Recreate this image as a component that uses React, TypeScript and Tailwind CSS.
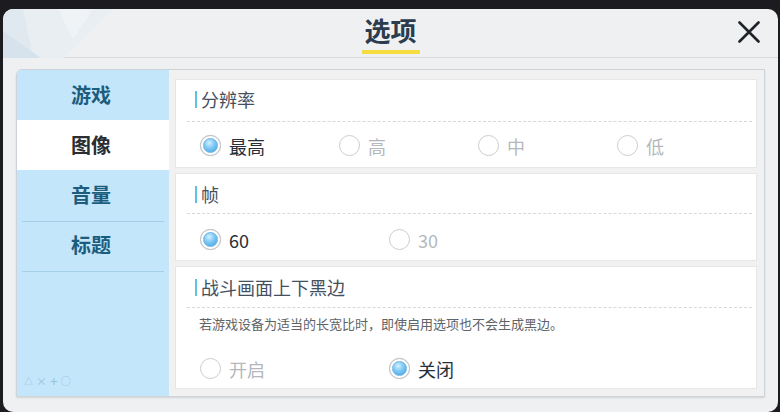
import React from "react";

type Opt = { label: string; checked?: boolean };

function Radio({ label, checked }: Opt) {
  return (
    <div className="flex items-center">
      <div
        className={
          "w-[21px] h-[21px] rounded-full border flex items-center justify-center bg-white " +
          (checked ? "border-[#b9bfc5] shadow-[0_0_1px_rgba(0,0,0,0.2)]" : "border-[#c9cdd1]")
        }
      >
        {checked && (
          <div className="w-[15px] h-[15px] rounded-full bg-[radial-gradient(circle_at_40%_30%,#d4f0ff_0%,#7cc8f4_45%,#3e9fe2_100%)] border border-[#6bb3e4]" />
        )}
      </div>
      <span
        className={
          "ml-[8px] text-[18px] leading-none " +
          (checked ? "text-[#262e39]" : "text-[#b4b8bc]")
        }
      >
        {label}
      </span>
    </div>
  );
}

function CardTitle({ children }: { children: React.ReactNode }) {
  return (
    <div className="flex items-center h-[20px] pl-[19px]">
      <div className="w-[2px] h-[17px] bg-[#5cc3e0]" />
      <span className="ml-[4px] text-[18px] leading-none text-[#45505e]">{children}</span>
    </div>
  );
}

function Dashed() {
  return <div className="ml-[11px] mr-[4px] border-t border-dashed border-[#d6d8da]" />;
}

export default function App() {
  const tabs = [
    { name: "游戏", active: false },
    { name: "图像", active: true },
    { name: "音量", active: false },
    { name: "标题", active: false },
  ];

  return (
    <div
      className="w-[780px] h-[412px] bg-[#1c1b20] overflow-hidden"
      style={{ fontFamily: '"Noto Sans CJK SC", "Noto Sans", sans-serif' }}
    >
      <div className="ml-[3px] mt-[9px] w-[775px] h-[403px] rounded-[10px] bg-[#eef0f2] overflow-hidden flex flex-col">
        {/* header */}
        <div className="relative h-[49px] shrink-0 border-b border-[#d9dcdf] flex items-center justify-center">
          <svg className="absolute left-0 top-0" width="130" height="49" viewBox="0 0 130 49">
            <polygon points="0,0 70,0 20,49 0,49" fill="#e0e9f0" />
            <polygon points="20,0 110,0 60,49 30,49" fill="#e8eef2" />
            <polygon points="0,22 38,49 0,49" fill="#d6e3ec" />
            <polygon points="55,0 90,0 70,30" fill="#f0f3f5" />
          </svg>
          <div className="relative flex flex-col items-center">
            <span className="text-[26px] font-bold leading-none text-[#2d3b4e] mt-[4px]">选项</span>
            <div className="mt-[7px] w-[58px] h-[4px] bg-[#f6dd3f] rounded-[1px]" />
          </div>
          <svg className="absolute right-[18px] top-[12px]" width="22" height="22" viewBox="0 0 22 22">
            <path d="M1.5 1.5 L20.5 20.5 M20.5 1.5 L1.5 20.5" stroke="#1f2329" strokeWidth="2.6" strokeLinecap="round" />
          </svg>
        </div>

        {/* body */}
        <div className="flex-1 pt-[11px] pl-[13px] pr-[13px] pb-[12px]">
          <div className="h-[328px] flex border border-[#cdd3d8] shadow-[0_1px_2px_rgba(0,0,0,0.12)] rounded-tl-[6px] overflow-hidden">
            {/* sidebar */}
            <div className="relative w-[152px] shrink-0 bg-[#c4e6fb] flex flex-col">
              {tabs.map((t) => (
                <div
                  key={t.name}
                  className={
                    "h-[50px] flex items-center justify-center pr-[4px] text-[20px] font-bold " +
                    (t.active ? "bg-white text-[#2a2d31]" : "text-[#1c5d7e]")
                  }
                >
                  {t.name}
                </div>
              ))}
              <div className="absolute left-[5px] right-[5px] top-[151px] border-t border-[#a5cfe7]" />
              <div className="absolute left-[5px] right-[5px] top-[201px] border-t border-[#a5cfe7]" />
              <div className="absolute left-[7px] bottom-[8px] flex items-center gap-[3px] text-[#9ac3dc] text-[11px] leading-none">
                <span className="text-[9px]">△</span>
                <span>×</span>
                <span className="text-[14px]">+</span>
                <span className="text-[10px]">○</span>
              </div>
            </div>

            {/* content */}
            <div className="flex-1 bg-[#f1f1f1] pt-[9px] pl-[6px] pr-[8px] flex flex-col gap-[5px]">
              <div className="h-[89px] bg-white border border-[#e4e6e8] pt-[9px]">
                <CardTitle>分辨率</CardTitle>
                <div className="mt-[12px]">
                  <Dashed />
                </div>
                <div className="mt-[13px] pl-[24px] flex">
                  {[
                    { label: "最高", checked: true },
                    { label: "高" },
                    { label: "中" },
                    { label: "低" },
                  ].map((o) => (
                    <div key={o.label} className="w-[139px]">
                      <Radio {...o} />
                    </div>
                  ))}
                </div>
              </div>

              <div className="h-[88px] bg-white border border-[#e4e6e8] pt-[10px]">
                <CardTitle>帧</CardTitle>
                <div className="mt-[9px]">
                  <Dashed />
                </div>
                <div className="mt-[15px] pl-[24px] flex">
                  <div className="w-[189px]">
                    <Radio label="60" checked />
                  </div>
                  <Radio label="30" />
                </div>
              </div>

              <div className="h-[123px] bg-white border border-[#e4e6e8] pt-[10px]">
                <CardTitle>战斗画面上下黑边</CardTitle>
                <div className="mt-[10px]">
                  <Dashed />
                </div>
                <div className="mt-[9px] pl-[23px] text-[13px] leading-none text-[#5e6368]">
                  若游戏设备为适当的长宽比时，即使启用选项也不会生成黑边。
                </div>
                <div className="mt-[28px] pl-[24px] flex">
                  <div className="w-[189px]">
                    <Radio label="开启" />
                  </div>
                  <Radio label="关闭" checked />
                </div>
              </div>
            </div>
          </div>
        </div>
      </div>
    </div>
  );
}
